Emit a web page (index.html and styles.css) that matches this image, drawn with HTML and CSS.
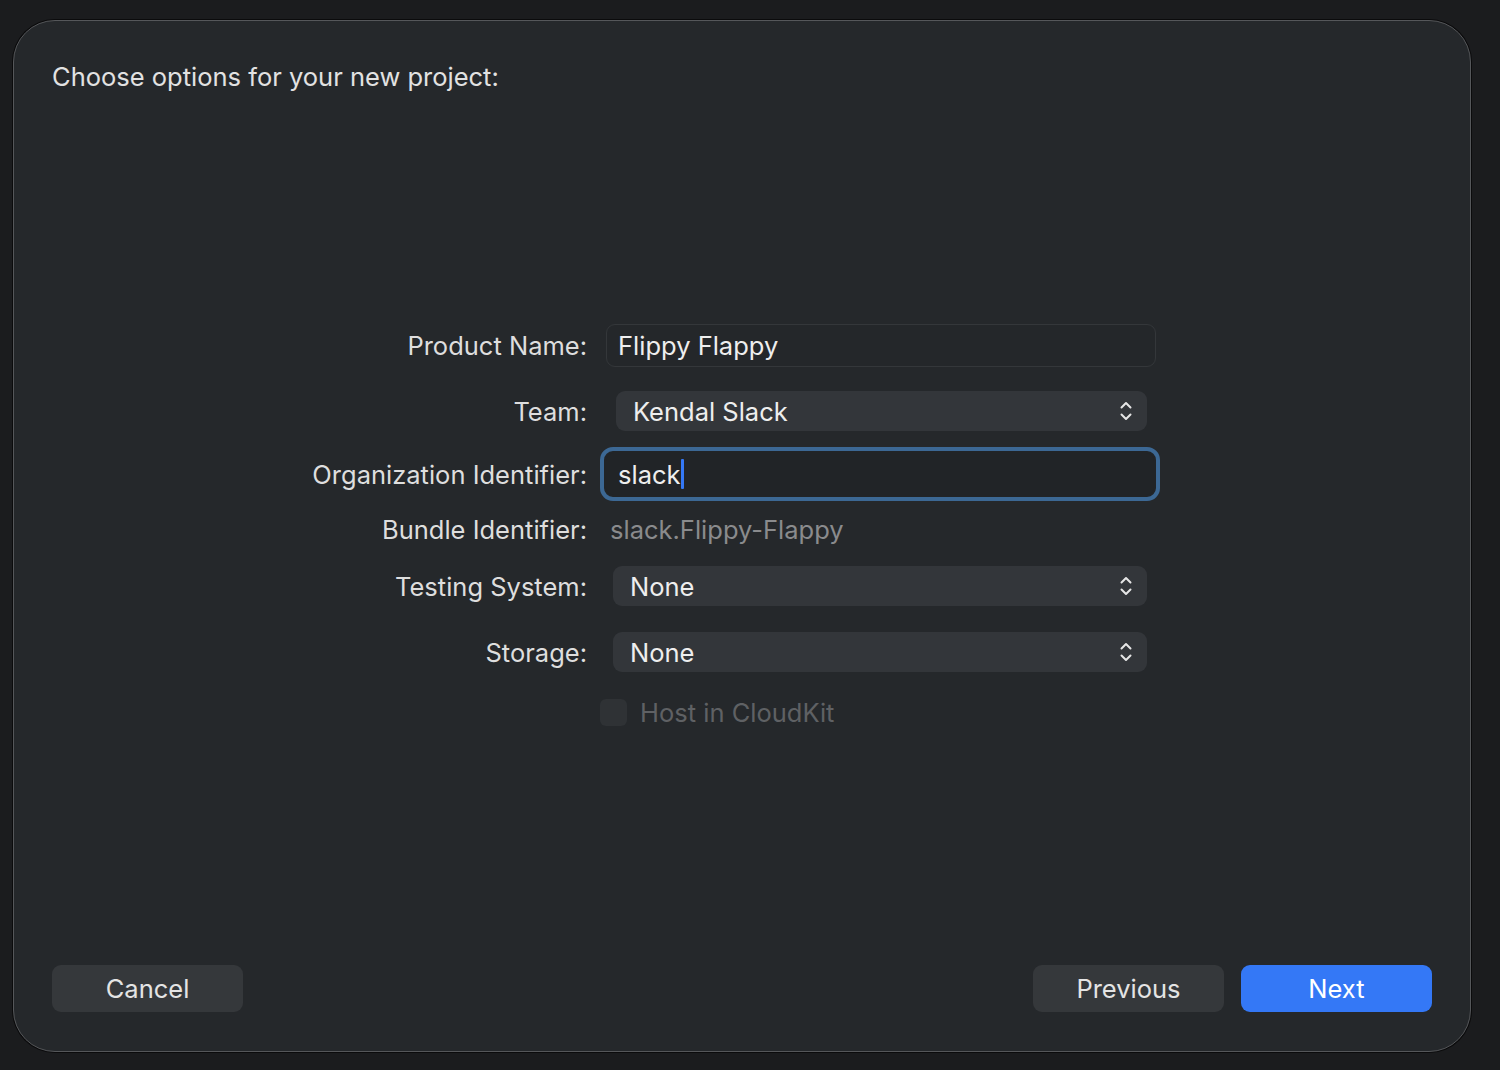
FILE: index.html
```html
<!DOCTYPE html>
<html>
<head>
<meta charset="utf-8">
<link rel="stylesheet" href="styles.css">
</head>
<body>
<div class="window">
  <div class="title">Choose options for your new project:</div>
  <div class="form">
    <div class="row r1">
      <div class="label">Product Name:</div>
      <div class="field"><div class="textbox">Flippy Flappy</div></div>
    </div>
    <div class="row r2">
      <div class="label">Team:</div>
      <div class="field"><div class="popup team"><span>Kendal Slack</span>
        <svg class="chev" width="14" height="22" viewBox="0 0 14 22"><path d="M2.5 7.5 L7 3 L11.5 7.5 M2.5 14.5 L7 19 L11.5 14.5" fill="none" stroke="#e6e6e6" stroke-width="2" stroke-linecap="round" stroke-linejoin="round"/></svg></div></div>
    </div>
    <div class="row r3">
      <div class="label">Organization Identifier:</div>
      <div class="field"><div class="focusring"><div class="focusinner"><span>slack</span><span class="caret"></span></div></div></div>
    </div>
    <div class="row r4">
      <div class="label">Bundle Identifier:</div>
      <div class="field"><span class="bundle">slack.Flippy-Flappy</span></div>
    </div>
    <div class="row r5">
      <div class="label">Testing System:</div>
      <div class="field"><div class="popup"><span>None</span>
        <svg class="chev" width="14" height="22" viewBox="0 0 14 22"><path d="M2.5 7.5 L7 3 L11.5 7.5 M2.5 14.5 L7 19 L11.5 14.5" fill="none" stroke="#e6e6e6" stroke-width="2" stroke-linecap="round" stroke-linejoin="round"/></svg></div></div>
    </div>
    <div class="row r6">
      <div class="label">Storage:</div>
      <div class="field"><div class="popup"><span>None</span>
        <svg class="chev" width="14" height="22" viewBox="0 0 14 22"><path d="M2.5 7.5 L7 3 L11.5 7.5 M2.5 14.5 L7 19 L11.5 14.5" fill="none" stroke="#e6e6e6" stroke-width="2" stroke-linecap="round" stroke-linejoin="round"/></svg></div></div>
    </div>
    <div class="row r7">
      <div class="label"></div>
      <div class="field check"><span class="box"></span><span class="checklabel">Host in CloudKit</span></div>
    </div>
  </div>
  <div class="buttons">
    <div class="btn">Cancel</div>
    <div class="spacer"></div>
    <div class="btn">Previous</div>
    <div class="btn primary">Next</div>
  </div>
</div>
</body>
</html>
```
FILE: styles.css
```css
html, body {
  margin: 0;
  padding: 0;
}
body {
  background: #1b1c1e;
  width: 1500px;
  height: 1070px;
  overflow: hidden;
  font-family: Inter, "Noto Sans", sans-serif;
  color: #e0e0e0;
}
.window {
  box-sizing: border-box;
  margin: 20px 0 0 13px;
  width: 1458px;
  height: 1032px;
  background: #25282b;
  border: 1px solid #55575a;
  border-radius: 42px;
  box-shadow: 0 0 0 1px #0b0b0c;
  display: flex;
  flex-direction: column;
}
.title {
  margin: 42px 0 0 38px;
  font-size: 25.5px;
  line-height: 28px;
  color: #e2e2e2;
}
.form {
  margin: 233px 0 0 273px;
  display: flex;
  flex-direction: column;
}
.row {
  display: flex;
  align-items: center;
}
.label {
  width: 300px;
  text-align: right;
  font-size: 25.5px;
  color: #dedede;
  flex: none;
}
.field {
  margin-left: 13px;
  width: 560px;
  display: flex;
  align-items: center;
  font-size: 25.5px;
  color: #eeeeee;
}
.r1 { height: 43px; }
.r2 { height: 40px; margin-top: 24px; }
.r3 { height: 54px; margin-top: 16px; }
.r4 { height: 28px; margin-top: 14px; }
.r5 { height: 40px; margin-top: 23px; }
.r6 { height: 40px; margin-top: 26px; }
.r7 { height: 28px; margin-top: 26px; }

.textbox {
  box-sizing: border-box;
  margin-left: 6px;
  width: 550px;
  height: 43px;
  border: 1px solid #34373a;
  border-radius: 9px;
  background: #24272a;
  padding-left: 11px;
  display: flex;
  align-items: center;
}
.popup {
  box-sizing: border-box;
  margin-left: 13px;
  width: 534px;
  height: 40px;
  background: #33363a;
  border-radius: 9px;
  padding: 0 14px 0 17px;
  display: flex;
  align-items: center;
  justify-content: space-between;
}
.popup.team {
  margin-left: 16px;
  width: 531px;
}
.chev { flex: none; }
.focusring {
  box-sizing: border-box;
  width: 560px;
  height: 54px;
  border: 4px solid #3c6894;
  border-radius: 13px;
  background: #212427;
  padding: 2px;
}
.focusinner {
  box-sizing: border-box;
  height: 100%;
  border-radius: 8px;
  background: #212427;
  padding-left: 12px;
  display: flex;
  align-items: center;
}
.caret {
  display: inline-block;
  width: 3px;
  height: 30px;
  background: #3478f6;
  border-radius: 1px;
  margin-left: 0;
}
.bundle {
  margin-left: 10px;
  color: #8a8b8d;
}
.check .box {
  width: 27px;
  height: 27px;
  background: #2f3235;
  border-radius: 6px;
  flex: none;
}
.checklabel {
  margin-left: 13px;
  color: #5f6164;
}
.buttons {
  margin: auto 38px 39px 38px;
  display: flex;
  align-items: center;
  gap: 17px;
}
.spacer { flex: 1; }
.btn {
  width: 191px;
  height: 47px;
  border-radius: 9px;
  background: #35383b;
  color: #e4e4e4;
  font-size: 25.5px;
  display: flex;
  align-items: center;
  justify-content: center;
}
.btn.primary {
  background: #3478f6;
  color: #ffffff;
}
```
